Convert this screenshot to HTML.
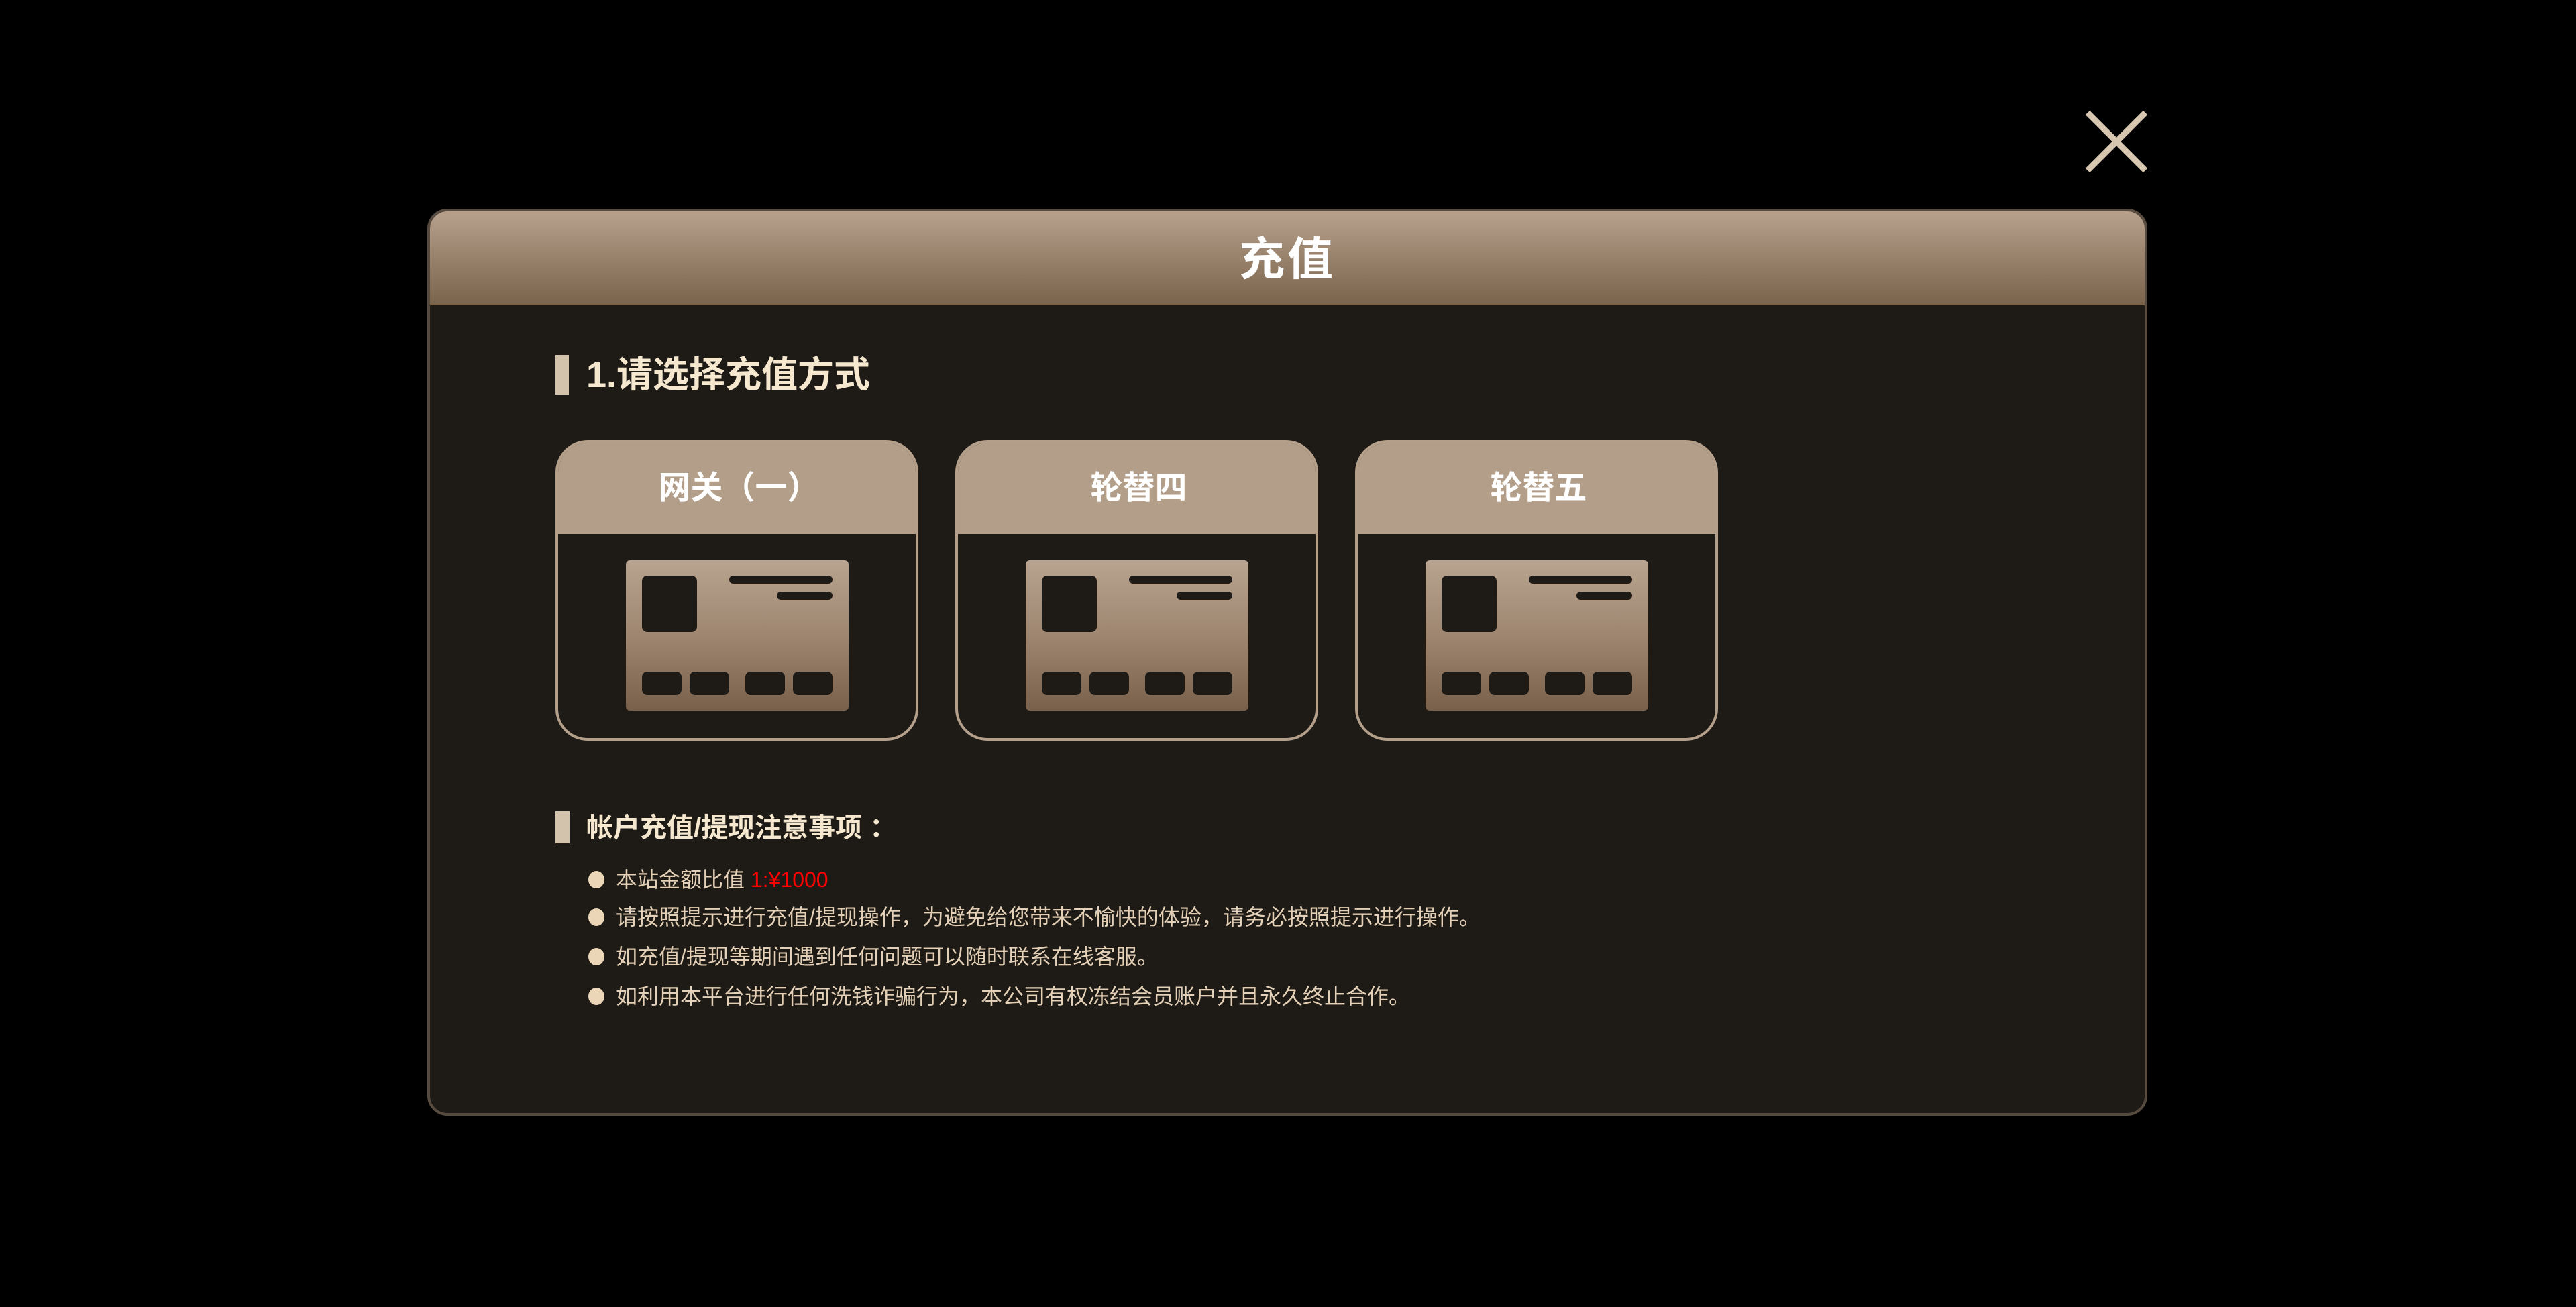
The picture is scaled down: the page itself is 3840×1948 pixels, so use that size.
<!DOCTYPE html>
<html><head><meta charset="utf-8"><style>
*{margin:0;padding:0;box-sizing:border-box}
body{width:3840px;height:1948px;background:#000;position:relative;overflow:hidden;font-family:"Liberation Sans","Noto Sans CJK SC",sans-serif}
.modal{position:absolute;left:637px;top:311px;width:2564px;height:1352px;background:#1e1a16;border:4px solid #574b40;border-radius:30px;overflow:hidden}
.hdr{position:absolute;left:0;top:0;right:0;height:140px;background:linear-gradient(#b7a18d,#7a634b);color:#fff;font-size:68px;font-weight:bold;text-align:center;line-height:144px;letter-spacing:4px}
.abs{position:absolute}
.bar{position:absolute;background:#d3c3ad}
.t1{position:absolute;left:874px;color:#f6e8cf;font-weight:bold}
.card{position:absolute;top:656px;width:541px;height:448px;border:4px solid #b39f8a;border-radius:48px;overflow:hidden;background:#1e1a16}
.card .ch{height:136px;background:#b29e89;color:#fff;font-size:48px;font-weight:bold;text-align:center;line-height:136px;padding-left:6px}
.ic{position:absolute;left:101px;top:175px;width:332px;height:224px;border-radius:6px;background:linear-gradient(#b8a490,#9e8670 50%,#78604a)}
.ic div{position:absolute;background:#1e1a16;border-radius:8px}
.dot{position:absolute;left:877px;width:24px;height:26px;border-radius:50%;background:#ecd6b8}
.li{position:absolute;left:918px;font-size:32px;color:#e3d0b6;line-height:40px}
</style></head><body>
<svg class="abs" style="left:3108px;top:164px" width="94" height="94" viewBox="0 0 94 94"><path d="M4 4L90 90M90 4L4 90" stroke="#d7c7b0" stroke-width="9"/></svg>
<div class="modal"><div class="hdr">充值</div></div>
<div class="bar" style="left:828px;top:529px;width:20px;height:59px"></div>
<div class="t1" style="top:522px;font-size:54px;line-height:74px">1.请选择充值方式</div>

<div class="card" style="left:828px"><div class="ch">网关（一）</div><div class="ic"><div style="left:24px;top:23px;width:82px;height:84px"></div><div style="left:154px;top:23px;width:154px;height:12px;border-radius:6px"></div><div style="left:225px;top:47px;width:83px;height:12px;border-radius:6px"></div><div style="left:24px;top:166px;width:59px;height:35px"></div><div style="left:95px;top:166px;width:59px;height:35px"></div><div style="left:178px;top:166px;width:59px;height:35px"></div><div style="left:249px;top:166px;width:59px;height:35px"></div></div></div>
<div class="card" style="left:1424px"><div class="ch">轮替四</div><div class="ic"><div style="left:24px;top:23px;width:82px;height:84px"></div><div style="left:154px;top:23px;width:154px;height:12px;border-radius:6px"></div><div style="left:225px;top:47px;width:83px;height:12px;border-radius:6px"></div><div style="left:24px;top:166px;width:59px;height:35px"></div><div style="left:95px;top:166px;width:59px;height:35px"></div><div style="left:178px;top:166px;width:59px;height:35px"></div><div style="left:249px;top:166px;width:59px;height:35px"></div></div></div>
<div class="card" style="left:2020px"><div class="ch">轮替五</div><div class="ic"><div style="left:24px;top:23px;width:82px;height:84px"></div><div style="left:154px;top:23px;width:154px;height:12px;border-radius:6px"></div><div style="left:225px;top:47px;width:83px;height:12px;border-radius:6px"></div><div style="left:24px;top:166px;width:59px;height:35px"></div><div style="left:95px;top:166px;width:59px;height:35px"></div><div style="left:178px;top:166px;width:59px;height:35px"></div><div style="left:249px;top:166px;width:59px;height:35px"></div></div></div>

<div class="bar" style="left:828px;top:1209px;width:21px;height:48px"></div>
<div class="t1" style="top:1208px;font-size:40px;line-height:52px">帐户充值/提现注意事项 ：</div>

<div class="dot" style="top:1298px"></div><div class="li" style="top:1291px">本站金额比值 <span style="color:#ff0000">1:¥1000</span></div>
<div class="dot" style="top:1354px"></div><div class="li" style="top:1347px">请按照提示进行充值/提现操作，为避免给您带来不愉快的体验，请务必按照提示进行操作。</div>
<div class="dot" style="top:1413px"></div><div class="li" style="top:1406px">如充值/提现等期间遇到任何问题可以随时联系在线客服。</div>
<div class="dot" style="top:1472px"></div><div class="li" style="top:1465px">如利用本平台进行任何洗钱诈骗行为，本公司有权冻结会员账户并且永久终止合作。</div>
</body></html>
